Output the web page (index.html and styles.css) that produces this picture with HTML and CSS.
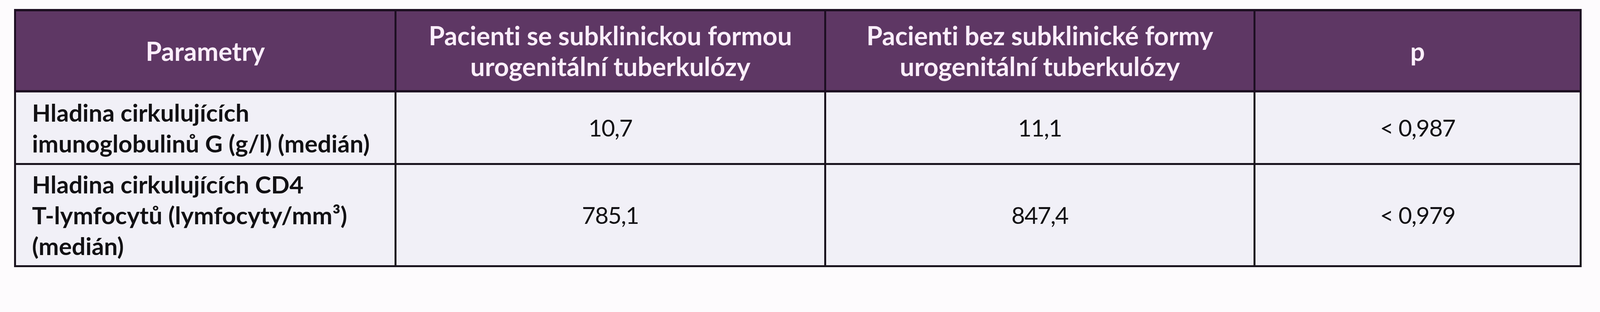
FILE: index.html
```html
<!DOCTYPE html>
<html lang="cs">
<head>
<meta charset="utf-8">
<title>Tabulka</title>
<link rel="stylesheet" href="styles.css">
</head>
<body>
<table class="data">
  <colgroup>
    <col class="c1">
    <col class="c2">
    <col class="c3">
    <col class="c4">
  </colgroup>
  <thead>
    <tr class="head-row">
      <th>Parametry</th>
      <th>Pacienti se subklinickou formou<br>urogenitální tuberkulózy</th>
      <th>Pacienti bez subklinické formy<br>urogenitální tuberkulózy</th>
      <th>p</th>
    </tr>
  </thead>
  <tbody>
    <tr class="row-a">
      <td class="label">Hladina cirkulujících<br>imunoglobulinů G (g/l) (medián)</td>
      <td class="val">10,7</td>
      <td class="val">11,1</td>
      <td class="val">&lt; 0,987</td>
    </tr>
    <tr class="row-b">
      <td class="label">Hladina cirkulujících CD4<br>T-lymfocytů (lymfocyty/mm³)<br>(medián)</td>
      <td class="val">785,1</td>
      <td class="val">847,4</td>
      <td class="val">&lt; 0,979</td>
    </tr>
  </tbody>
</table>
</body>
</html>
```

FILE: styles.css
```css
html, body {
  margin: 0;
  padding: 0;
  background: #fdfbfd;
}

body {
  padding: 23px 0 0 36px;
  font-family: Lato, "Liberation Sans", sans-serif;
  font-variant-ligatures: none;
}

.data {
  border-collapse: collapse;
  table-layout: fixed;
  width: 4008px;
  line-height: 79px;
}

.c1 { width: 974px; }
.c2 { width: 1100px; }
.c3 { width: 1099px; }
.c4 { width: 835px; }

.data th,
.data td {
  border: 5px solid #1a141e;
  vertical-align: middle;
  padding: 10px 0;
}

.data th {
  background: #5e3764;
  color: #fbeefb;
  font-size: 66px;
  font-weight: 700;
  text-align: center;
  border-color: #1d0f22;
  border-width: 6px 5px;
}

.head-row th {
  height: 182px;
}

.data td {
  background: #f1f0f7;
  color: #121114;
}

.label {
  font-size: 62px;
  font-weight: 700;
  text-align: left;
  padding-left: 41px !important;
}

.val {
  font-size: 60px;
  font-weight: 400;
  letter-spacing: -1.5px;
  text-align: center;
}

.row-a td { height: 161px; }
.row-b td { height: 237px; }
```
